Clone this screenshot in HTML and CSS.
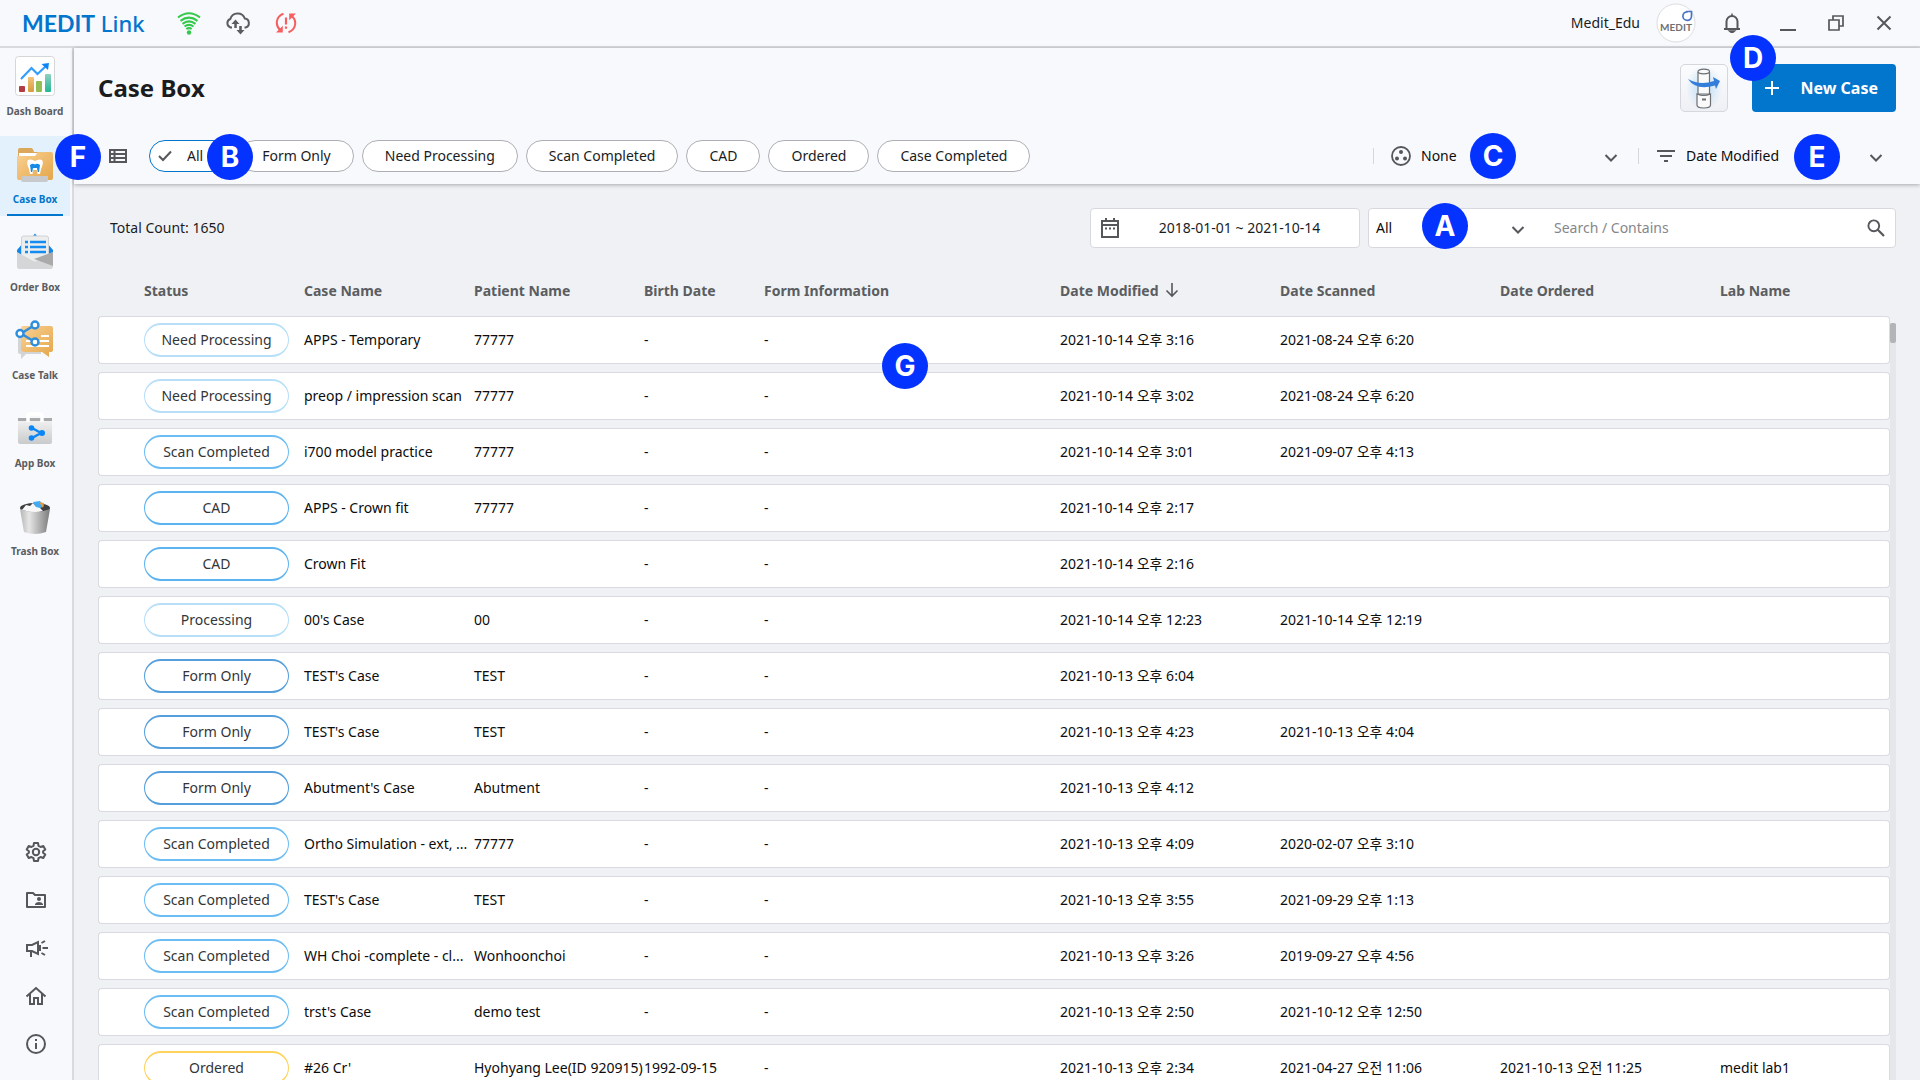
FILE: index.html
```
<!DOCTYPE html>
<html lang="en">
<head>
    <meta charset="UTF-8">
    <meta name="viewport" content="width=device-width, initial-scale=1.0">
    <title>MEDIT Link - Case Box</title>
    <link rel="stylesheet" href="styles.css">
</head>
<body>
<!-- shared symbols -->
<svg class="defs" aria-hidden="true">
    <symbol id="chevron" viewBox="0 0 14 10"><path d="M1.500 2 L7 7.500 L12.500 2" fill="none" stroke="currentColor" stroke-width="2"/></symbol>
</svg>

<header class="topbar">
    <a class="logo" href="#"><b>MEDIT</b> Link</a>
    <div class="topbar-status">
        <svg class="wifi" width="24" height="24" viewBox="0 0 24 24" fill="none" stroke="#34c94b" stroke-width="2.100">
            <path d="M1 6.500 Q12 -2 23 6.500"/>
            <path d="M3.500 9.800 Q12 3.500 20.500 9.800"/>
            <path d="M5.500 12.800 Q12 8 18.500 12.800"/>
            <path d="M7.500 15.500 Q12 12.300 16.500 15.500"/>
            <path d="M9.300 18 Q12 16.200 14.700 18"/>
            <circle cx="12" cy="21.500" r="2.200" fill="#34c94b" stroke="none"/>
        </svg>
        <svg width="26" height="24" viewBox="0 0 26 24">
            <path d="M7 16.500 H5.500 A4.500 4.500 0 0 1 5.300 8 A7.600 7.600 0 0 1 19.800 7.500 A4.600 4.600 0 0 1 20.500 16.500 H19.500" fill="none" stroke="#5b5d60" stroke-width="2"/>
            <path d="M10.500 8.500 L14.500 13 H11.800 V17 H9.300 V13 H6.500 Z M15.500 23.500 L11.500 19 H14.200 V15 H16.800 V19 H19.500 Z" fill="#5b5d60"/>
        </svg>
        <svg width="22" height="24" viewBox="0 0 22 24">
            <path d="M8.500 2.800 C1 5.500 -0.500 14 5.500 19.500 M13.500 21.200 C21 18.500 22.500 10 16.500 4.500" fill="none" stroke="#f55f5f" stroke-width="2"/>
            <path d="M7.800 14.800 V21.600 H1 Z M14.200 9.200 V2.400 H21 Z" fill="#f55f5f"/>
            <path d="M11 6.500 V13.500 M11 15.500 V17.800" stroke="#f55f5f" stroke-width="2.200"/>
        </svg>
    </div>
    <div class="topbar-user">
        <span>Medit_Edu</span>
        <svg class="avatar" width="40" height="40" viewBox="0 0 40 40">
            <circle cx="20" cy="20" r="19" fill="#fff" stroke="#dcdde0"/>
            <path d="M31 8.500 H35.500 V13 A4.300 4.300 0 1 1 31 8.800 Z" fill="none" stroke="#4a74c4" stroke-width="1.700"/>
            <text x="20" y="28" text-anchor="middle">MEDIT</text>
        </svg>
        <button class="icon-btn bell" type="button" aria-label="Notifications">
            <svg width="18" height="20" viewBox="0 0 18 20">
                <path d="M3.500 16 V8.500 A5.500 5.500 0 0 1 14.500 8.500 V16 M1 16 H17" fill="none" stroke="#55575a" stroke-width="2"/>
                <path d="M9 0.500 V3 M6.500 18 H11.500 L9 20 Z" fill="#55575a" stroke="#55575a" stroke-width="1.500"/>
            </svg>
        </button>
        <button class="icon-btn" type="button" aria-label="Minimize">
            <svg width="16" height="18" viewBox="0 0 16 18"><path d="M0 16 H16" stroke="#55575a" stroke-width="2"/></svg>
        </button>
        <button class="icon-btn" type="button" aria-label="Restore">
            <svg width="16" height="16" viewBox="0 0 16 16" fill="none" stroke="#55575a" stroke-width="1.700"><path d="M1 5 H11 V15 H1 Z M5 5 V1 H15 V11 H11"/></svg>
        </button>
        <button class="icon-btn" type="button" aria-label="Close">
            <svg width="16" height="16" viewBox="0 0 16 16"><path d="M1.500 1.500 L14.500 14.500 M14.500 1.500 L1.500 14.500" stroke="#55575a" stroke-width="2"/></svg>
        </button>
    </div>
</header>

<div class="layout">
    <nav class="sidebar">
        <div class="menu">
            <a class="menu-item" href="#">
                <svg width="40" height="40" viewBox="0 0 40 40">
                    <defs><linearGradient id="teal" x2="0" y2="1"><stop stop-color="#8fd0c0"/><stop offset="1" stop-color="#22b795"/></linearGradient>
                    <linearGradient id="amber" x2="0" y2="1"><stop stop-color="#f2c47c"/><stop offset="1" stop-color="#d79c3c"/></linearGradient></defs>
                    <rect x="0.500" y="0.500" width="39" height="39" rx="3" fill="#fff" stroke="#d5d6d8"/>
                    <rect x="4" y="30" width="6" height="6" rx="1" fill="#b23b44"/>
                    <rect x="13" y="21" width="6" height="15" rx="1" fill="url(#amber)"/>
                    <rect x="21" y="25" width="6" height="11" rx="1" fill="#93bd55"/>
                    <rect x="30" y="18" width="6" height="18" rx="1" fill="url(#teal)"/>
                    <path d="M6 23 L16.500 12 L22.500 18 L31 10" fill="none" stroke="#329dfb" stroke-width="2.200"/>
                    <path d="M26.500 8 L34 7 L33 14 Z" fill="#0c86f5"/>
                </svg>
                <span>Dash Board</span>
            </a>
            <a class="menu-item active" href="#">
                <svg width="40" height="40" viewBox="0 0 40 40">
                    <defs><linearGradient id="folder" x2="1" y2="1"><stop stop-color="#fad193"/><stop offset="1" stop-color="#e4a64a"/></linearGradient></defs>
                    <path d="M3 6 Q3 4 5 4 H16 Q18 4 19 8 H36 V32 H3 Z" fill="#dba75b"/>
                    <path d="M4 9 H24 L22 13 H4 Z" fill="#fff"/>
                    <path d="M2 12 H20 L23 8 H36 Q38 8 38 10 V34 Q38 36 36 36 H4 Q2 36 2 34 Z" fill="url(#folder)"/>
                    <path d="M13 16 Q16 14.500 20 17 Q24 14.500 27 16 Q29 19 26 25 L25 30 H22.500 L22 26 H18 L17.500 30 H15 L14 25 Q11 19 13 16 Z" fill="#fff"/>
                    <path d="M15 21 Q18 19 20 20.500 Q22 19 25 21 L24 28 H22.800 L22 24 H18 L17.200 28 H16 Z" fill="#168ae4"/>
                    <path d="M7 32 H33 V36 Q33 38 31 38 H8 Q6 38 6 36 Z" fill="#c8c9cd"/>
                </svg>
                <span>Case Box</span>
            </a>
            <a class="menu-item" href="#">
                <svg width="40" height="40" viewBox="0 0 40 40">
                    <path d="M18 4 L20 1.500 L22 4 Z M2 22 V18 L8 11 V24 Z M38 22 V18 L32 11 V24 Z" fill="#1488ea"/>
                    <rect x="6.500" y="4" width="27" height="26" rx="2" fill="#eceded" stroke="#d1d2d4"/>
                    <path d="M10 10 h3 M15 10 h16 M10 15 h3 M15 15 h16 M10 20 h3 M15 20 h16" stroke="#168cf0" stroke-width="2.600"/>
                    <path d="M2 20 L20 30 L38 20 V34 Q38 37 36 37 H4 Q2 37 2 34 Z" fill="#d5d6d7"/>
                    <path d="M19 27 L38 20 V34 Z" fill="#aaa"/>
                </svg>
                <span>Order Box</span>
            </a>
            <a class="menu-item" href="#">
                <svg width="40" height="40" viewBox="0 0 40 40">
                    <path d="M3 14 H26 V34 H11 L6 39 V34 H5 Q3 34 3 32 Z" fill="#d3d4d6"/>
                    <path d="M8 6 H36 Q38 6 38 8 V30 Q38 32 36 32 H34 V37 L27 32 H10 Q6 32 6 29 V9 Q6 6 8 6 Z" fill="url(#folder)"/>
                    <path d="M26 16 H34 M11 21 H34 M11 26 H34" stroke="#fff" stroke-width="2"/>
                    <path d="M20 5 L6 13.500 L20 22" fill="none" stroke="#358fda" stroke-width="2.600"/>
                    <g fill="#fff" stroke="#2f8edb" stroke-width="2.400"><circle cx="20" cy="5" r="3.500"/><circle cx="5" cy="13.500" r="3.500"/><circle cx="20" cy="22" r="3.500"/></g>
                </svg>
                <span>Case Talk</span>
            </a>
            <a class="menu-item" href="#">
                <svg width="40" height="40" viewBox="0 0 40 40">
                    <defs><linearGradient id="bag" x2="0" y2="1"><stop stop-color="#f0f0f0"/><stop offset="1" stop-color="#c9cacb"/></linearGradient></defs>
                    <path d="M3 10 H37 V16 H3 Z" fill="#a9aaab"/>
                    <path d="M3 13 H37 V34 Q37 36 35 36 H5 Q3 36 3 34 Z" fill="url(#bag)"/>
                    <path d="M13 14 V8 Q13 6 15 6 H25 Q27 6 27 8 V14" fill="none" stroke="#fff" stroke-width="3.500"/>
                    <path d="M17 20 L26 25 L17 30" fill="none" stroke="#0c86f5" stroke-width="2.400"/>
                    <g fill="#0c86f5"><circle cx="16.500" cy="20" r="2.800"/><circle cx="27" cy="25" r="3"/><circle cx="16.500" cy="30" r="2.800"/></g>
                </svg>
                <span>App Box</span>
            </a>
            <a class="menu-item" href="#">
                <svg width="40" height="40" viewBox="0 -2 40 40">
                    <defs><linearGradient id="bin"><stop stop-color="#b4b4b4"/><stop offset="0.300" stop-color="#e6e6e6"/><stop offset="1" stop-color="#7b7b7b"/></linearGradient></defs>
                    <ellipse cx="20" cy="10" rx="15" ry="5" fill="#3f3f41"/>
                    <path d="M18 4 L25 3 L29 8 L22 12 Z" fill="#42aaf2"/><path d="M24 4 L29 5 L28 10 Z" fill="#e49b43"/>
                    <path d="M7 12 L11 7 L15 8 L18 5 L21 9 L25 10 L28 13 L20 15 Z" fill="#f8f8f8"/>
                    <path d="M5 11 Q20 17 35 11 L31 34 Q20 38 9 34 Z" fill="url(#bin)"/>
                </svg>
                <span>Trash Box</span>
            </a>
        </div>
        <div class="tools">
            <button class="icon-btn" type="button" aria-label="Settings">
                <svg width="24" height="24" viewBox="0 0 24 24" fill="none" stroke="#55575a" stroke-width="2" stroke-linejoin="round">
                    <path d="M10 3 H14 L14.500 5.800 L16.600 7 L19.300 6 L21.300 9.500 L19.100 11.300 V12.700 L21.300 14.500 L19.300 18 L16.600 17 L14.500 18.200 L14 21 H10 L9.500 18.200 L7.400 17 L4.700 18 L2.700 14.500 L4.900 12.700 V11.300 L2.700 9.500 L4.700 6 L7.400 7 L9.500 5.800 Z"/>
                    <circle cx="12" cy="12" r="3.200"/>
                </svg>
            </button>
            <button class="icon-btn" type="button" aria-label="Shared folder">
                <svg width="24" height="24" viewBox="0 0 24 24">
                    <path d="M3 5 H9 L11 7 H21 V19 H3 Z" fill="none" stroke="#55575a" stroke-width="2" stroke-linejoin="round"/>
                    <circle cx="15" cy="11" r="2" fill="#55575a"/><path d="M11 17 V16 Q12 14 15 14 Q18 14 19 16 V17 Z" fill="#55575a"/>
                </svg>
            </button>
            <button class="icon-btn" type="button" aria-label="Announcements">
                <svg width="24" height="24" viewBox="0 0 24 24" fill="none" stroke="#55575a" stroke-width="2">
                    <path d="M3 9 H8 L14 6 V18 L8 15 H3 Z M7 15 V21 M16 9 V15 M18.500 12 H24 M17.500 7 L21 5 M17.500 17 L21 19"/>
                </svg>
            </button>
            <button class="icon-btn" type="button" aria-label="Home">
                <svg width="24" height="24" viewBox="0 0 24 24" fill="none" stroke="#55575a" stroke-width="2">
                    <path d="M2.500 12.500 L12 4 L21.500 12.500 M6 10 V20 H10 V14 H14 V20 H18 V10"/>
                </svg>
            </button>
            <button class="icon-btn" type="button" aria-label="Information">
                <svg width="24" height="24" viewBox="0 0 24 24" fill="none" stroke="#55575a" stroke-width="2">
                    <circle cx="12" cy="12" r="9"/><path d="M12 11 V17 M12 7 V9"/>
                </svg>
            </button>
        </div>
    </nav>

    <main class="main">
        <section class="page-head">
            <div class="title-row">
                <h1>Case Box</h1>
                <button class="scanner-btn" type="button" aria-label="Scanner">
                    <svg width="40" height="44" viewBox="0 0 40 44">
                        <defs><radialGradient id="glow"><stop stop-color="#b9dcf8"/><stop offset="1" stop-color="#b9dcf8" stop-opacity="0"/></radialGradient></defs>
                        <ellipse cx="20" cy="22" rx="18" ry="23" fill="url(#glow)"/>
                        <g fill="#fafafa" stroke="#6d6f72" stroke-width="1.200">
                            <path d="M14 6 V28 H25.500 V6"/><ellipse cx="19.750" cy="5.500" rx="5.750" ry="2.300"/>
                            <path d="M13 28 V39 Q13 42 19.750 42 Q26.500 42 26.500 39 V28 Q19.750 31 13 28 Z"/>
                        </g>
                        <rect x="18" y="32.500" width="4" height="2" fill="#6d6f72"/>
                        <path d="M4 13 Q16 20 30 15 L29 11 L36 15 L32 23 L31 19.500 Q12 25 4 13 Z" fill="#337edb"/>
                    </svg>
                </button>
                <button class="new-case" type="button">
                    <svg width="16" height="16" viewBox="0 0 16 16"><path d="M8 1 V15 M1 8 H15" stroke="#fff" stroke-width="2"/></svg>
                    <span>New Case</span>
                </button>
            </div>
            <div class="filter-row">
                <button class="icon-btn view-btn" type="button" aria-label="List view">
                    <svg width="18" height="14" viewBox="0 0 18 14" fill="none" stroke="#55575a" stroke-width="2"><path d="M1 1 H17 V13 H1 Z M1 5 H17 M1 9 H17 M5.500 1 V13"/></svg>
                </button>
                <div class="pills">
                    <button class="pill selected" type="button">
                        <svg width="14" height="12" viewBox="0 0 14 12"><path d="M1 6 L5 10 L13 1.500" fill="none" stroke="#55575a" stroke-width="2"/></svg>All
                    </button>
                    <button class="pill" type="button">Form Only</button>
                    <button class="pill" type="button">Need Processing</button>
                    <button class="pill" type="button">Scan Completed</button>
                    <button class="pill" type="button">CAD</button>
                    <button class="pill" type="button">Ordered</button>
                    <button class="pill" type="button">Case Completed</button>
                </div>
                <div class="picker">
                    <svg width="20" height="20" viewBox="0 0 20 20">
                        <circle cx="10" cy="10" r="9" fill="none" stroke="#55575a" stroke-width="1.800"/>
                        <g fill="#55575a"><circle cx="10" cy="6" r="2"/><circle cx="6" cy="12.500" r="2"/><circle cx="14" cy="12.500" r="2"/></g>
                    </svg>
                    <select aria-label="Group by"><option>None</option></select>
                    <svg class="chevron" width="14" height="10"><use href="#chevron"/></svg>
                </div>
                <div class="picker">
                    <svg width="20" height="14" viewBox="0 0 20 14"><path d="M1 2 H19 M4 7 H16 M8 12 H12" stroke="#55575a" stroke-width="2"/></svg>
                    <select aria-label="Sort by"><option>Date Modified</option></select>
                    <svg class="chevron" width="14" height="10"><use href="#chevron"/></svg>
                </div>
            </div>
        </section>

        <section class="content">
            <div class="search-row">
                <p class="total">Total Count: 1650</p>
                <button class="box date-range" type="button">
                    <svg width="20" height="22" viewBox="0 0 20 22"><path d="M2 4 H18 V20 H2 Z M2 8 H18 M6 1 V4 M14 1 V4" fill="none" stroke="#55575a" stroke-width="2"/><path d="M5 11.500 H7 M9 11.500 H11 M13 11.500 H15" stroke="#55575a" stroke-width="2"/></svg>
                    <span>2018-01-01 ~ 2021-10-14</span>
                </button>
                <div class="box search-box">
                    <select aria-label="Search field"><option>All</option></select>
                    <svg class="chevron" width="14" height="10"><use href="#chevron"/></svg>
                    <input type="text" aria-label="Search" placeholder="Search / Contains">
                    <button class="icon-btn" type="button" aria-label="Search">
                        <svg width="18" height="18" viewBox="0 0 18 18"><circle cx="6.800" cy="6.800" r="5.400" fill="none" stroke="#55575a" stroke-width="1.900"/><path d="M10.800 10.800 L17 17" stroke="#55575a" stroke-width="2.200"/></svg>
                    </button>
                </div>
            </div>

            <div class="list">
                <table class="cases">
                    <colgroup>
                        <col class="c-pad"><col class="c-status"><col class="c-name"><col class="c-name"><col class="c-birth"><col class="c-form"><col class="c-date"><col class="c-date"><col class="c-date"><col class="c-lab">
                    </colgroup>
                    <thead>
                        <tr>
                            <th></th><th>Status</th><th>Case Name</th><th>Patient Name</th><th>Birth Date</th><th>Form Information</th>
                            <th>Date Modified <svg class="sort" width="14" height="16" viewBox="0 0 14 16"><path d="M7 1 V14 M1.500 8.500 L7 14 L12.500 8.500" fill="none" stroke="#55575a" stroke-width="1.600"/></svg></th>
                            <th>Date Scanned</th><th>Date Ordered</th><th>Lab Name</th>
                        </tr>
                    </thead>
                    <tbody>
                        <tr><td></td><td><span class="badge need">Need Processing</span></td><td>APPS - Temporary</td><td>77777</td><td>-</td><td>-</td><td>2021-10-14 오후 3:16</td><td>2021-08-24 오후 6:20</td><td></td><td></td></tr>
                        <tr><td></td><td><span class="badge need">Need Processing</span></td><td>preop / impression scan</td><td>77777</td><td>-</td><td>-</td><td>2021-10-14 오후 3:02</td><td>2021-08-24 오후 6:20</td><td></td><td></td></tr>
                        <tr><td></td><td><span class="badge scan">Scan Completed</span></td><td>i700 model practice</td><td>77777</td><td>-</td><td>-</td><td>2021-10-14 오후 3:01</td><td>2021-09-07 오후 4:13</td><td></td><td></td></tr>
                        <tr><td></td><td><span class="badge cad">CAD</span></td><td>APPS - Crown fit</td><td>77777</td><td>-</td><td>-</td><td>2021-10-14 오후 2:17</td><td></td><td></td><td></td></tr>
                        <tr><td></td><td><span class="badge cad">CAD</span></td><td>Crown Fit</td><td></td><td>-</td><td>-</td><td>2021-10-14 오후 2:16</td><td></td><td></td><td></td></tr>
                        <tr><td></td><td><span class="badge need">Processing</span></td><td>00's Case</td><td>00</td><td>-</td><td>-</td><td>2021-10-14 오후 12:23</td><td>2021-10-14 오후 12:19</td><td></td><td></td></tr>
                        <tr><td></td><td><span class="badge form">Form Only</span></td><td>TEST's Case</td><td>TEST</td><td>-</td><td>-</td><td>2021-10-13 오후 6:04</td><td></td><td></td><td></td></tr>
                        <tr><td></td><td><span class="badge form">Form Only</span></td><td>TEST's Case</td><td>TEST</td><td>-</td><td>-</td><td>2021-10-13 오후 4:23</td><td>2021-10-13 오후 4:04</td><td></td><td></td></tr>
                        <tr><td></td><td><span class="badge form">Form Only</span></td><td>Abutment's Case</td><td>Abutment</td><td>-</td><td>-</td><td>2021-10-13 오후 4:12</td><td></td><td></td><td></td></tr>
                        <tr><td></td><td><span class="badge scan">Scan Completed</span></td><td>Ortho Simulation - ext, ...</td><td>77777</td><td>-</td><td>-</td><td>2021-10-13 오후 4:09</td><td>2020-02-07 오후 3:10</td><td></td><td></td></tr>
                        <tr><td></td><td><span class="badge scan">Scan Completed</span></td><td>TEST's Case</td><td>TEST</td><td>-</td><td>-</td><td>2021-10-13 오후 3:55</td><td>2021-09-29 오후 1:13</td><td></td><td></td></tr>
                        <tr><td></td><td><span class="badge scan">Scan Completed</span></td><td>WH Choi -complete - cl...</td><td>Wonhoonchoi</td><td>-</td><td>-</td><td>2021-10-13 오후 3:26</td><td>2019-09-27 오후 4:56</td><td></td><td></td></tr>
                        <tr><td></td><td><span class="badge scan">Scan Completed</span></td><td>trst's Case</td><td>demo test</td><td>-</td><td>-</td><td>2021-10-13 오후 2:50</td><td>2021-10-12 오후 12:50</td><td></td><td></td></tr>
                        <tr><td></td><td><span class="badge ordered">Ordered</span></td><td>#26 Cr'</td><td>Hyohyang Lee(ID 920915)</td><td>1992-09-15</td><td>-</td><td>2021-10-13 오후 2:34</td><td>2021-04-27 오전 11:06</td><td>2021-10-13 오전 11:25</td><td>medit lab1</td></tr>
                    </tbody>
                </table>
                <div class="scrollbar"><div class="thumb"></div></div>
            </div>
        </section>
    </main>
</div>

<!-- guide markers -->
<span class="marker marker-a">A</span>
<span class="marker marker-b">B</span>
<span class="marker marker-c">C</span>
<span class="marker marker-d">D</span>
<span class="marker marker-e">E</span>
<span class="marker marker-f">F</span>
<span class="marker marker-g">G</span>
</body>
</html>
```
FILE: styles.css
```
* {
  box-sizing: border-box;
}

body {
  margin: 0;
  height: 100vh;
  overflow: hidden;
  display: flex;
  flex-direction: column;
  position: relative;
  background: #f8f9fd;
  color: #1b1c1e;
  font-family: "Noto Sans", "Noto Sans CJK KR", sans-serif;
  font-size: 14px;
  line-height: 20px;
}

button, select, input {
  font: inherit;
  color: inherit;
}

.defs {
  position: absolute;
  width: 0;
  height: 0;
}

.icon-btn {
  display: flex;
  align-items: center;
  justify-content: center;
  padding: 0;
  border: none;
  background: none;
  cursor: pointer;
}

/* top bar */
.topbar {
  flex: none;
  display: flex;
  align-items: center;
  height: 48px;
  padding: 0 12px 0 22px;
  border-bottom: 2px solid #d9dade;
}

.logo {
  color: #0275cd;
  font-size: 22px;
  font-weight: 500;
  text-decoration: none;
}

.logo b {
  font-family: Lato, sans-serif;
  font-size: 23px;
  font-weight: 700;
}

.topbar-status {
  display: flex;
  align-items: center;
  gap: 24px;
  margin-left: 32px;
}

.topbar-user {
  display: flex;
  align-items: center;
  margin-left: auto;
}

.topbar-user .icon-btn {
  width: 48px;
  height: 40px;
}

.topbar-user .bell {
  width: 64px;
  margin-left: 4px;
}

.avatar {
  margin-left: 16px;
}

.avatar text {
  fill: #707174;
  font-family: Lato, sans-serif;
  font-size: 10px;
  font-weight: 700;
}

/* side menu */
.layout {
  flex: 1;
  display: flex;
  min-height: 0;
}

.sidebar {
  flex: none;
  display: flex;
  flex-direction: column;
  justify-content: space-between;
  width: 74px;
  border-right: 2px solid #d9dade;
}

.menu {
  display: flex;
  flex-direction: column;
  gap: 8px;
}

.menu-item {
  position: relative;
  display: flex;
  flex-direction: column;
  align-items: center;
  gap: 7px;
  width: 70px;
  height: 80px;
  padding-top: 8px;
  color: #5b5d60;
  font-size: 10px;
  font-weight: 700;
  line-height: 16px;
  text-decoration: none;
  white-space: nowrap;
}

.menu-item.active {
  background: #e2f1fc;
  color: #0275cd;
}

.menu-item.active::after {
  content: "";
  position: absolute;
  left: 7px;
  right: 7px;
  bottom: 0;
  height: 2px;
  background: #0275cd;
}

.tools {
  display: flex;
  flex-direction: column;
  align-items: center;
  gap: 24px;
  padding-bottom: 24px;
}

/* page header */
.main {
  flex: 1;
  display: flex;
  flex-direction: column;
  min-width: 0;
  background: #eff1f5;
}

.page-head {
  z-index: 1;
  padding: 16px 24px 12px;
  background: #f8f9fd;
  box-shadow: 0 1px 4px rgba(0, 0, 0, 0.3);
}

.title-row {
  display: flex;
  align-items: center;
  margin-bottom: 28px;
}

h1 {
  flex: 1;
  margin: 0;
  font-size: 24px;
  line-height: 32px;
}

.scanner-btn {
  display: flex;
  align-items: center;
  justify-content: center;
  width: 48px;
  height: 48px;
  margin-right: 24px;
  padding: 0;
  border: 1px solid #d5d7dc;
  border-radius: 5px;
  background: linear-gradient(#fbfcfe, #eff0f4);
}

.new-case {
  display: flex;
  align-items: center;
  gap: 20px;
  height: 48px;
  padding: 0 18px 0 12px;
  border: none;
  border-radius: 4px;
  background: #0275cd;
  color: #fff;
  font-size: 16px;
  font-weight: 700;
}

.filter-row {
  display: flex;
  align-items: center;
  padding-left: 11px;
}

.pills {
  display: flex;
  gap: 8px;
  margin-left: 22px;
  margin-right: auto;
}

.pill {
  height: 32px;
  padding: 0 22px;
  border: 1px solid #adafb5;
  border-radius: 16px;
  background: #fff;
  white-space: nowrap;
}

.pill.selected {
  display: flex;
  align-items: center;
  gap: 15px;
  padding-left: 8px;
  border-color: #0275cd;
  padding-right: 27px;
}

.picker {
  display: flex;
  align-items: center;
  gap: 10px;
  width: 265px;
  padding: 0 20px 0 18px;
  background: linear-gradient(#d5d7dc, #d5d7dc) left center / 1px 16px no-repeat;
}

.picker:last-child {
  width: 258px;
  padding-right: 13px;
}

select {
  flex: 1;
  min-width: 0;
  padding: 0;
  border: none;
  background: none;
  appearance: none;
  color: #0c0c0d;
}

.chevron {
  flex: none;
  margin-top: 3px;
  color: #55575a;
  pointer-events: none;
}

/* list */
.content {
  flex: 1;
  min-height: 0;
  display: flex;
  flex-direction: column;
  padding: 24px 24px 0;
}

.search-row {
  display: flex;
  align-items: center;
  gap: 8px;
}

.total {
  flex: 1;
  margin: 0;
  padding-left: 12px;
}

.box {
  display: flex;
  align-items: center;
  height: 40px;
  border: 1px solid #d7d9de;
  border-radius: 4px;
  background: #fff;
}

.date-range {
  gap: 8px;
  width: 270px;
  padding: 0 8px 0 9px;
}

.date-range span {
  flex: 1;
  text-align: center;
}

.search-box {
  width: 528px;
  padding: 0 10px 0 7px;
}

.search-box select {
  flex: none;
  width: 135px;
}

.search-box input {
  flex: 1;
  min-width: 0;
  margin-left: 29px;
  padding: 0;
  border: none;
  outline: none;
  background: none;
}

.search-box input::placeholder {
  color: #85878b;
}

.list {
  flex: 1;
  display: flex;
  min-height: 0;
  margin-top: 16px;
}

.cases {
  flex: 1;
  width: 100%;
  height: max-content;
  table-layout: fixed;
  border-collapse: separate;
  border-spacing: 0 8px;
}

.c-pad { width: 46px; }
.c-status { width: 160px; }
.c-name { width: 170px; }
.c-birth { width: 120px; }
.c-date { width: 220px; }
.c-lab { width: 170px; }

.cases th {
  height: 36px;
  padding: 2px 0 0;
  color: #5b5d60;
  font-weight: 700;
  text-align: left;
  white-space: nowrap;
}

.cases td {
  height: 48px;
  padding: 0;
  border: solid #d9dbe0;
  border-width: 1px 0;
  background: #fff;
  color: #0c0c0d;
  white-space: nowrap;
}

.cases td:first-child {
  border-left-width: 1px;
  border-radius: 4px 0 0 4px;
}

.cases td:last-child {
  border-right-width: 1px;
  border-radius: 0 4px 4px 0;
}

.sort {
  margin-left: 3px;
  vertical-align: -2px;
}

.badge {
  display: block;
  width: 145px;
  border: solid;
  border-width: 2px 1px;
  border-radius: 17px;
  color: #333538;
  line-height: 30px;
  text-align: center;
}

.badge.need { border-color: #b8dffa; }
.badge.scan { border-color: #6cbdf4; }
.badge.cad { border-color: #5cb3f1; }
.badge.form { border-color: #559fdc; }
.badge.ordered { border-color: #fdd35c; }

.scrollbar {
  flex: none;
  width: 6px;
  margin-top: 59px;
  background: #e6e7eb;
}

.thumb {
  height: 20px;
  border-radius: 2px;
  background: #b3b4b8;
}

/* markers lie over the page */
.marker {
  position: absolute;
  z-index: 5;
  width: 46px;
  height: 46px;
  border-radius: 50%;
  background: #0432ff;
  color: #fff;
  font-family: Inter, sans-serif;
  font-size: 28px;
  font-weight: 700;
  line-height: 46px;
  text-align: center;
}

.marker-a { top: 203px; right: 452px; }
.marker-b { top: 134px; left: 207px; }
.marker-c { top: 133px; right: 404px; }
.marker-d { top: 35px; right: 144px; }
.marker-e { top: 134px; right: 80px; }
.marker-f { top: 134px; left: 55px; }
.marker-g { top: 343px; left: 882px; }
```
